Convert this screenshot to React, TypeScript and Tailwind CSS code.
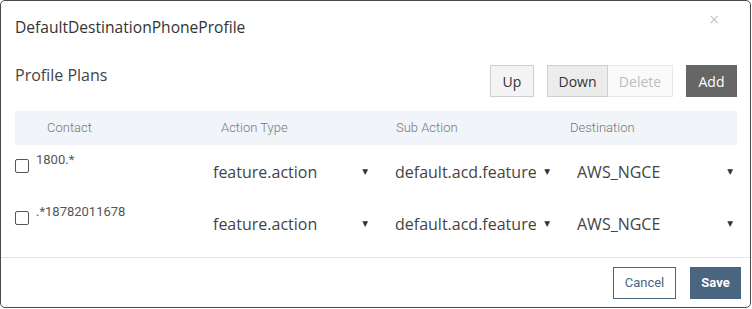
import React from 'react';

// --- rows shown in the plans table ---
interface PlanRow {
  contact: string;
  actionType: string;
  subAction: string;
  destination: string;
}

const rows: PlanRow[] = [
  { contact: '1800.*', actionType: 'feature.action', subAction: 'default.acd.feature', destination: 'AWS_NGCE' },
  { contact: '.*18782011678', actionType: 'feature.action', subAction: 'default.acd.feature', destination: 'AWS_NGCE' },
];

function FakeSelect({ value, width }: { value: string; width: string }) {
  return (
    <div className={`flex items-center justify-between ${width} h-[22px]`}>
      <span className="overflow-hidden whitespace-nowrap text-[16px] leading-[22px] text-[#444] font-['Open_Sans',sans-serif]">
        {value}
      </span>
      <span className="shrink-0 pl-[8px] text-[7.5px] text-[#333] font-['DejaVu_Sans',sans-serif]">▼</span>
    </div>
  );
}

export default function App() {
  return (
    <div className="w-[751px] h-[308px] bg-white border border-[#4a4a4a] rounded-[5px] flex flex-col overflow-hidden">
      {/* header */}
      <div className="h-[49px] flex items-center justify-between pl-[14px] pr-[30px]">
        <h1 className="text-[15.6px] leading-[20px] text-[#333] font-['Open_Sans',sans-serif] pt-[2px]">
          DefaultDestinationPhoneProfile
        </h1>
        <span className="text-[14px] leading-none text-[#c8c8c8] font-['DejaVu_Sans',sans-serif] -mt-[14px]">×</span>
      </div>

      {/* body */}
      <div className="pl-[14px] pr-[13px] flex-1">
        <div className="flex items-start justify-between h-[32px] mt-[15px]">
          <h2 className="text-[16px] leading-[20px] text-[#444] font-['Open_Sans',sans-serif]">Profile Plans</h2>
          <div className="flex items-center font-['Open_Sans',sans-serif] text-[14px]">
            <button className="w-[44px] h-[32px] bg-[#f4f4f4] border border-[#cfcfcf] text-[#333]">Up</button>
            <button className="ml-[13px] w-[61px] h-[32px] bg-[#ececec] border border-[#cfcfcf] text-[#333]">Down</button>
            <button className="w-[65px] h-[32px] bg-[#fafafa] border border-[#e8e8e8] border-l-0 text-[#bdbdbd]">Delete</button>
            <button className="ml-[13px] w-[51px] h-[32px] bg-[#666666] text-white">Add</button>
          </div>
        </div>

        {/* plans table */}
        <div className="mt-[14px] w-[722px]">
          <div className="grid grid-cols-[190px_180px_175px_177px] h-[34px] items-center bg-[#f1f5f9] text-[13px] text-[#777] font-['Roboto',sans-serif] font-light">
            <span className="pl-[32px]">Contact</span>
            <span className="pl-[16px]">Action Type</span>
            <span className="pl-[11px]">Sub Action</span>
            <span className="pl-[10px]">Destination</span>
          </div>
          {rows.map((row) => (
            <div key={row.contact} className="grid grid-cols-[190px_180px_175px_177px] h-[52px] items-start">
              <div className="flex items-start">
                <span className="mt-[14px] w-[14px] h-[14px] border border-[#555] rounded-[2px] bg-white" />
                <span className="ml-[7px] mt-[7px] text-[13px] leading-[16px] text-[#555] font-['Roboto',sans-serif]">
                  {row.contact}
                </span>
              </div>
              <div className="pl-[8px] pt-[16px]">
                <FakeSelect value={row.actionType} width="w-[155px]" />
              </div>
              <div className="pl-[10px] pt-[16px]">
                <FakeSelect value={row.subAction} width="w-[155px]" />
              </div>
              <div className="pl-[17px] pt-[16px]">
                <FakeSelect value={row.destination} width="w-[156px]" />
              </div>
            </div>
          ))}
        </div>
      </div>

      {/* footer */}
      <div className="h-[50px] border-t border-[#e5e5e5] flex items-start justify-end gap-[14px] pt-[9px] pr-[9px]">
        <button className="w-[63px] h-[32px] border border-[#4a6580] text-[#4a6580] bg-white text-[13px] font-['Roboto',sans-serif]">
          Cancel
        </button>
        <button className="w-[51px] h-[32px] bg-[#4a6580] text-white text-[13px] font-bold font-['Roboto',sans-serif]">
          Save
        </button>
      </div>
    </div>
  );
}
